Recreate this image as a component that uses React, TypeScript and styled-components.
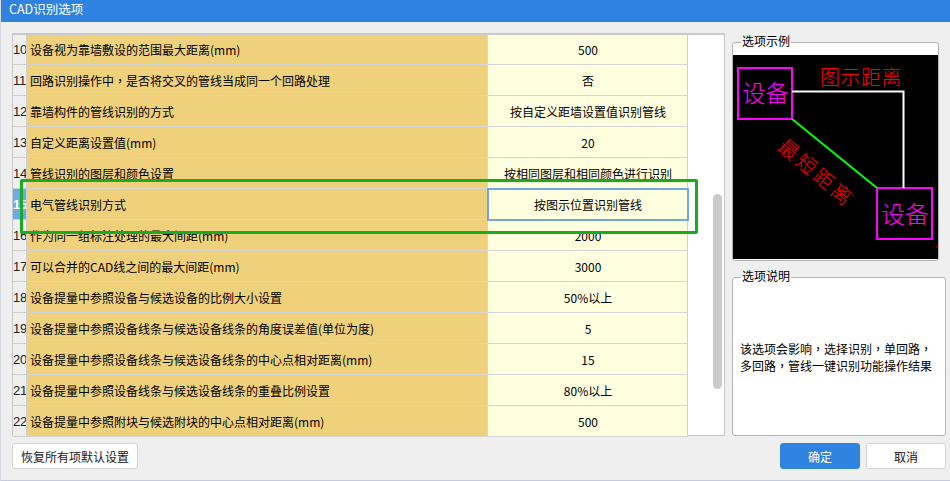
import styled, { createGlobalStyle } from 'styled-components'

type Option = { no: number; label: string; value: string }

const options: Option[] = [
  { no: 10, label: '设备视为靠墙敷设的范围最大距离(mm)', value: '500' },
  { no: 11, label: '回路识别操作中，是否将交叉的管线当成同一个回路处理', value: '否' },
  { no: 12, label: '靠墙构件的管线识别的方式', value: '按自定义距墙设置值识别管线' },
  { no: 13, label: '自定义距离设置值(mm)', value: '20' },
  { no: 14, label: '管线识别的图层和颜色设置', value: '按相同图层和相同颜色进行识别' },
  { no: 15, label: '电气管线识别方式', value: '按图示位置识别管线' },
  { no: 16, label: '作为同一组标注处理的最大间距(mm)', value: '2000' },
  { no: 17, label: '可以合并的CAD线之间的最大间距(mm)', value: '3000' },
  { no: 18, label: '设备提量中参照设备与候选设备的比例大小设置', value: '50%以上' },
  { no: 19, label: '设备提量中参照设备线条与候选设备线条的角度误差值(单位为度)', value: '5' },
  { no: 20, label: '设备提量中参照设备线条与候选设备线条的中心点相对距离(mm)', value: '15' },
  { no: 21, label: '设备提量中参照设备线条与候选设备线条的重叠比例设置', value: '80%以上' },
  { no: 22, label: '设备提量中参照附块与候选附块的中心点相对距离(mm)', value: '500' },
]

const SELECTED = 15
const FONT = `"Noto Sans CJK SC", "Liberation Sans", sans-serif`

// the original font centres the full-width comma in its cell
function withCommas(text: string) {
  return text.split(/(，)/).map((part, i) => (part === '，' ? <Comma key={i}>，</Comma> : part))
}

export default function App() {
  return (
    <>
      <GlobalStyle />
      <Dialog>
        <TitleBar>CAD识别选项</TitleBar>
        <Main>
          <TablePanel>
            <Rows>
              {options.map((item) => (
                <Row key={item.no}>
                  <RowNo $active={item.no === SELECTED}>{item.no}</RowNo>
                  <Label>
                    <span>{withCommas(item.label)}</span>
                  </Label>
                  <Value $active={item.no === SELECTED}>{item.value}</Value>
                </Row>
              ))}
            </Rows>
            <ScrollTrack>
              <ScrollThumb />
            </ScrollTrack>
            <Highlight />
          </TablePanel>
          <Side>
            <ExampleGroup>
              <Legend>选项示例</Legend>
              <ExampleCanvas />
            </ExampleGroup>
            <NoteGroup>
              <Legend>选项说明</Legend>
              <NoteText>{withCommas('该选项会影响，选择识别，单回路，多回路，管线一键识别功能操作结果')}</NoteText>
            </NoteGroup>
          </Side>
        </Main>
        <Footer>
          <ResetButton>恢复所有项默认设置</ResetButton>
          <FooterRight>
            <ActionButton $primary>确定</ActionButton>
            <ActionButton>取消</ActionButton>
          </FooterRight>
        </Footer>
      </Dialog>
    </>
  )
}

function ExampleCanvas() {
  return (
    <Canvas viewBox="0 0 205 204" width="205" height="204">
      <rect width="205" height="204" fill="#000" />
      <rect x="5" y="13" width="54" height="51" fill="none" stroke="#f0f" strokeWidth="2" />
      <rect x="144" y="133" width="55" height="51" fill="none" stroke="#f0f" strokeWidth="2" />
      <polyline points="59,36.5 170.5,36.5 170.5,133" fill="none" stroke="#fff" strokeWidth="2" />
      <line x1="59" y1="64" x2="144" y2="133" stroke="#0f0" strokeWidth="2" />
      <CanvasText x="9" y="47" fontSize="23.5" fill="#f0f">设备</CanvasText>
      <CanvasText x="148" y="168" fontSize="24" fill="#f0f">设备</CanvasText>
      <CanvasText x="87" y="30" fontSize="20" letterSpacing="0.5" fill="#f00">图示距离</CanvasText>
      <CanvasText
        x="83"
        y="125"
        fontSize="20"
        letterSpacing="3"
        fill="#f00"
        textAnchor="middle"
        transform="rotate(40 83 118)"
      >
        最短距离
      </CanvasText>
      <rect x="203" y="191" width="1" height="1" fill="#f00" />
    </Canvas>
  )
}

const GlobalStyle = createGlobalStyle`
  html, body {
    margin: 0;
    padding: 0;
    background: #efefef;
  }
  * {
    box-sizing: border-box;
  }
`

const Dialog = styled.div`
  width: 950px;
  height: 481px;
  display: flex;
  flex-direction: column;
  background: #efefef;
  border-left: 1px solid #d8dbe2;
  border-bottom: 1px solid #c3cbdc;
  font-family: ${FONT};
  font-size: 12px;
  color: #000;
  overflow: hidden;
`

const TitleBar = styled.div`
  height: 22px;
  margin-left: -1px;
  padding-left: 9px;
  flex-shrink: 0;
  background: #2e82e0;
  color: #fff;
  font-size: 12.5px;
  line-height: 18px;
`

const Main = styled.div`
  display: flex;
  gap: 7px;
  padding: 11px 0 0 11px;
  height: 414px;
`

const TablePanel = styled.div`
  position: relative;
  width: 713px;
  height: 403px;
  display: flex;
  background: #fff;
  border: 1px solid #c8c8c8;
  border-top-width: 2px;
`

const Rows = styled.div`
  width: 675px;
  display: flex;
  flex-direction: column;
`

const Row = styled.div`
  display: grid;
  grid-template-columns: 14px 461px 200px;
  height: 31px;
  flex-shrink: 0;
  &:first-child {
    height: 30px;
  }
`

const RowNo = styled.div<{ $active?: boolean }>`
  display: flex;
  align-items: center;
  overflow: hidden;
  white-space: nowrap;
  background: ${({ $active }) => ($active ? '#6aa9ea' : '#efefef')};
  color: ${({ $active }) => ($active ? '#fff' : '#222')};
  font-weight: ${({ $active }) => ($active ? 700 : 400)};
  font-family: "Liberation Sans", sans-serif;
  font-size: 13px;
  letter-spacing: -0.3px;
  border-bottom: 1px solid #d0d0d0;
  border-right: 1px solid #d0d0d0;
`

const Label = styled.div`
  display: flex;
  align-items: center;
  padding-left: 3px;
  background: #efd07b;
  border-bottom: 1px solid #d5d5d5;
  border-right: 1px solid #d5d5d5;
  white-space: nowrap;
  overflow: hidden;
`

const Comma = styled.span`
  font-family: "Noto Sans CJK TC", sans-serif;
`

const Value = styled.div<{ $active?: boolean }>`
  position: relative;
  z-index: ${({ $active }) => ($active ? 1 : 0)};
  display: flex;
  align-items: center;
  justify-content: center;
  padding-left: 1px;
  background: #ffffe0;
  border-bottom: 1px solid #d5d5d5;
  border-right: 1px solid #d0d0d0;
  white-space: nowrap;
  outline: ${({ $active }) => ($active ? '2px solid #6fa8dc' : 'none')};
  outline-offset: -1px;
`

const ScrollTrack = styled.div`
  flex: 1;
  padding: 159px 0 0 25px;
`

const ScrollThumb = styled.div`
  width: 9px;
  height: 195px;
  border-radius: 5px;
  background: #cbcbcb;
`

const Highlight = styled.div`
  position: absolute;
  z-index: 2;
  left: 7px;
  top: 144px;
  width: 678px;
  height: 55px;
  border: 3px solid #1aab1f;
  border-radius: 2px;
  pointer-events: none;
`

const Side = styled.div`
  display: flex;
  flex-direction: column;
  gap: 16px;
`

const Group = styled.div`
  position: relative;
  background: #fff;
  border: 1px solid #b4b4b4;
  border-radius: 3px;
`

const ExampleGroup = styled(Group)`
  width: 207px;
  height: 220px;
  margin-top: 9px;
  padding-top: 12px;
`

const NoteGroup = styled(Group)`
  width: 214px;
  height: 159px;
  display: flex;
  align-items: center;
  padding: 0 4px 0 7px;
`

const Legend = styled.span`
  position: absolute;
  left: 8px;
  top: -10px;
  padding: 0 1px;
  line-height: 16px;
  background: linear-gradient(#efefef 56%, #fff 56%);
`

const NoteText = styled.p`
  margin: 0;
  line-height: 17px;
`

const Canvas = styled.svg`
  display: block;
`

const CanvasText = styled.text`
  font-family: ${FONT};
  font-weight: 300;
`

const Footer = styled.div`
  display: flex;
  justify-content: space-between;
  padding: 0 4px 0 11px;
  margin-top: 7px;
`

const FooterRight = styled.div`
  display: flex;
  gap: 6px;
`

const ResetButton = styled.button`
  width: 126px;
  height: 26px;
  padding: 0;
  border: 1px solid #d4d4d4;
  border-radius: 3px;
  background: #fff;
  color: #222;
  font-family: ${FONT};
  font-size: 12px;
`

const ActionButton = styled.button<{ $primary?: boolean }>`
  width: 80px;
  height: 26px;
  padding: 0;
  border: 1px solid ${({ $primary }) => ($primary ? '#2e82e0' : '#d4d4d4')};
  border-radius: 3px;
  background: ${({ $primary }) => ($primary ? '#2e82e0' : '#fff')};
  color: ${({ $primary }) => ($primary ? '#fff' : '#111')};
  font-family: ${FONT};
  font-size: 12px;
`
